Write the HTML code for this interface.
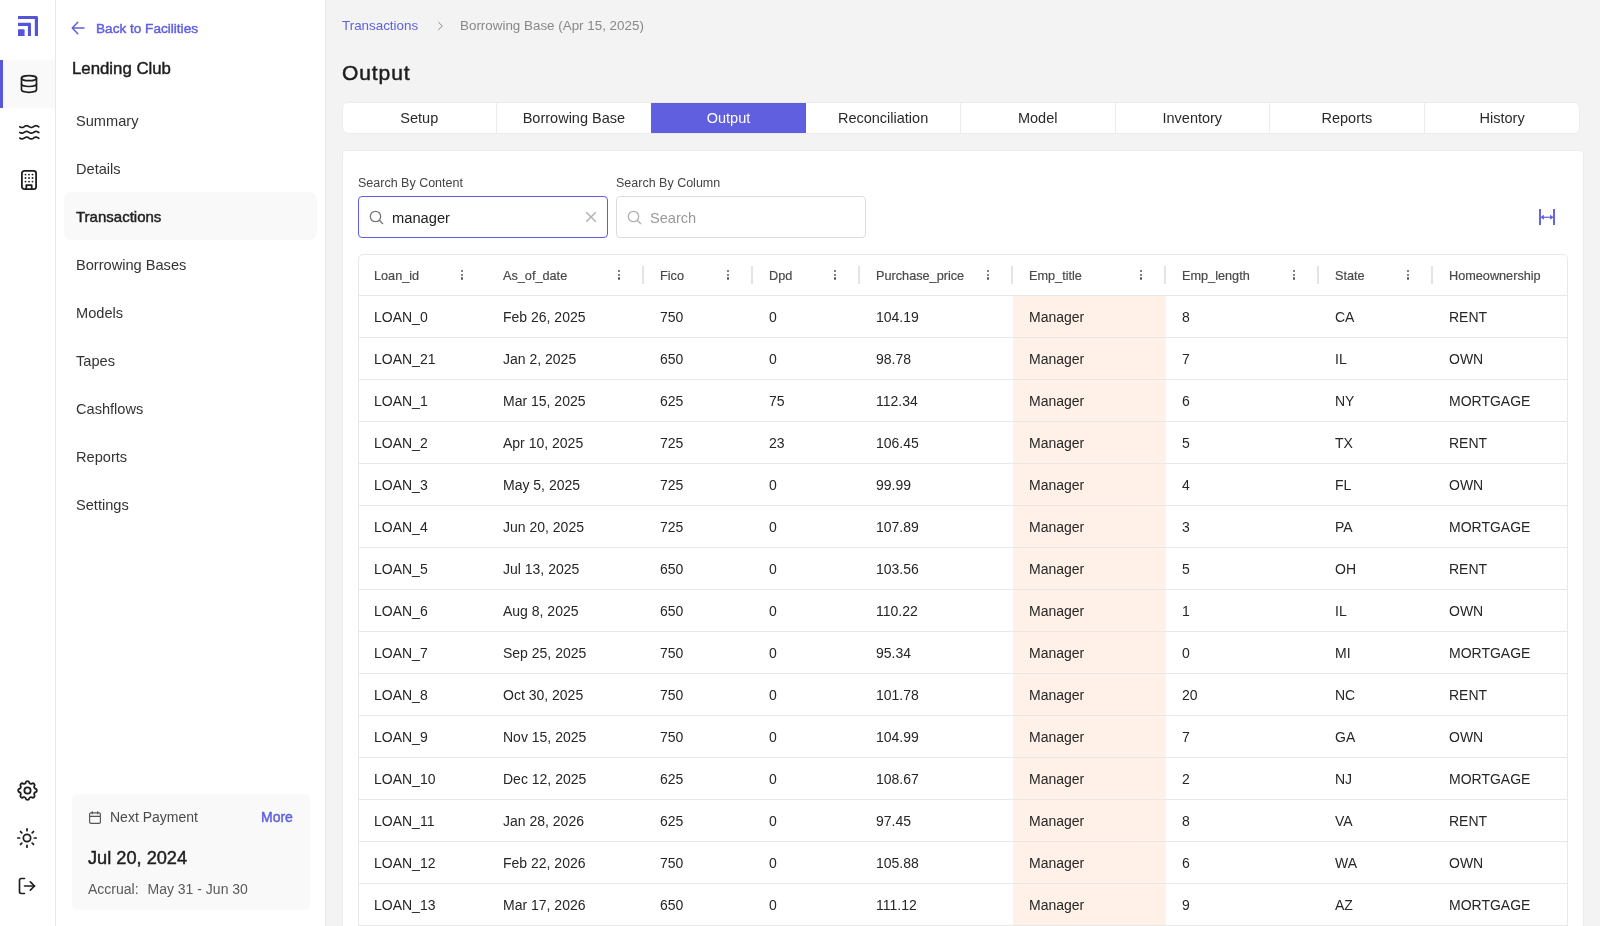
<!DOCTYPE html>
<html><head><meta charset="utf-8">
<style>
*{box-sizing:border-box;margin:0;padding:0}
html,body{width:1600px;height:926px;overflow:hidden;background:#f3f3f3;font-family:"Liberation Sans",sans-serif;color:#222}
.abs{position:absolute;white-space:nowrap}
#root{position:absolute;left:0;top:0;width:1600px;height:926px;will-change:transform}
.sb{-webkit-text-stroke:0.45px currentColor}
#rail{position:absolute;left:0;top:0;width:56px;height:926px;background:#fff;border-right:1px solid #e8e8e8}
#side{position:absolute;left:56px;top:0;width:270px;height:926px;background:#fff;border-right:1px solid #e8e8e8}
.ic{position:absolute;display:block}
.railact{position:absolute;left:0;top:60px;width:55px;height:48px;background:#f9f9f9}
.railbar{position:absolute;left:0;top:60px;width:3px;height:48px;background:#5856d9}
.nav{position:absolute;left:20px;margin-top:1px;font-size:14.6px;color:#333;white-space:nowrap;line-height:20px}
.navact{position:absolute;left:8px;top:192px;width:253px;height:48px;background:#f9f9f9;border-radius:7px}
.pay{position:absolute;left:16px;top:794px;width:238px;height:116px;background:#f9f9f9;border-radius:5px}
.crumb{position:absolute;top:16.5px;font-size:13.4px;white-space:nowrap;line-height:18px}
.tabs{position:absolute;left:342px;top:102px;width:1238px;height:32px;background:#fff;border-radius:6px;box-shadow:0 0 0 1px #ececec inset;overflow:hidden}
.tab{position:absolute;top:1px;height:30px;line-height:31px;text-align:center;font-size:14.5px;color:#2a2a2a}
.tdv{position:absolute;top:0;width:1px;height:32px;background:#ececec}
.tab.act{background:#5f5fe0;color:#fff}
.card{position:absolute;left:342px;top:150px;width:1242px;height:800px;background:#fff;border:1px solid #ececec;border-radius:4px}
.lbl{position:absolute;top:175px;font-size:12.5px;color:#444;white-space:nowrap;line-height:16px}
.inp{position:absolute;top:196px;width:250px;height:42px;border:1px solid #dcdcdc;border-radius:4px;background:#fff}
.inp.focus{border:1.5px solid #5e5ee0}
.inp .txt{position:absolute;left:33px;top:10.5px;line-height:20px;white-space:nowrap}
#tbl{position:absolute;left:358px;top:254px;width:1210px;height:700px;border:1px solid #e8e8e8;border-radius:5px 5px 0 0;background:#fff}
.th{position:absolute;top:254px;height:41px}
.th .tt{position:absolute;left:16px;top:14px;font-size:12.7px;color:#4a4a4a;-webkit-text-stroke:0.2px currentColor;line-height:16px;white-space:nowrap}
.sep{position:absolute;top:266px;width:2px;height:18px;background:#e4e4e4}
.keb{position:absolute;top:270px;width:2px;height:10px}
.keb i{position:absolute;left:0;width:2.2px;height:2.2px;border-radius:50%;background:#5a5a5a}
.hl{position:absolute;left:1013px;top:296px;width:153px;height:630px;background:#fff1e7}
.rl{position:absolute;left:359px;width:1208px;height:1px;background:#e8e8e8}
.td{position:absolute;height:42px;line-height:42px;padding-left:16px;font-size:14px;color:#262626;white-space:nowrap}
</style></head>
<body><div id="root">
<div id="rail">
  <svg class="ic" style="left:18px;top:16px" width="20" height="20" viewBox="0 0 20 20" fill="#5654d9">
    <path d="M0 0H18.8Q20 0 20 1.2V20H16.8V3.1H0Z"/>
    <path d="M0 6.8H11.8Q13 6.8 13 8V20H9.9V9.9H0Z"/>
    <path d="M0 13.2H5.6Q6.6 13.2 6.6 14.2V20H0Z"/>
  </svg>
  <div class="railact"></div><div class="railbar"></div>
  <svg class="ic" style="left:19px;top:74px" width="20" height="20" viewBox="0 0 24 24" fill="none" stroke="#1e1e1e" stroke-width="2" stroke-linecap="round" stroke-linejoin="round">
    <ellipse cx="12" cy="5" rx="9" ry="3"/><path d="M3 5v14c0 1.66 4 3 9 3s9-1.34 9-3V5"/><path d="M3 12c0 1.66 4 3 9 3s9-1.34 9-3"/>
  </svg>
  <svg class="ic" style="left:19px;top:123px" width="21" height="20" viewBox="0 0 21 20" fill="none" stroke="#1e1e1e" stroke-width="1.7" stroke-linecap="round" stroke-linejoin="round">
    <path d="M0.8 3.68L1.3 3.97L1.8 4.22L2.3 4.40L2.8 4.49L3.3 4.48L3.8 4.37L4.3 4.17L4.8 3.91L5.3 3.62L5.8 3.32L6.3 3.05L6.8 2.84L7.3 2.73L7.8 2.70L8.3 2.79L8.8 2.96L9.3 3.20L9.8 3.49L10.3 3.80L10.8 4.08L11.3 4.30L11.8 4.45L12.3 4.50L12.8 4.45L13.3 4.30L13.8 4.08L14.3 3.80L14.8 3.49L15.3 3.20L15.8 2.96L16.3 2.79L16.8 2.70L17.3 2.73L17.8 2.84L18.3 3.05L18.8 3.32L19.3 3.62L19.8 3.91"/><path d="M0.8 9.38L1.3 9.67L1.8 9.92L2.3 10.10L2.8 10.19L3.3 10.18L3.8 10.07L4.3 9.87L4.8 9.61L5.3 9.32L5.8 9.02L6.3 8.75L6.8 8.54L7.3 8.43L7.8 8.40L8.3 8.49L8.8 8.66L9.3 8.90L9.8 9.19L10.3 9.50L10.8 9.78L11.3 10.00L11.8 10.15L12.3 10.20L12.8 10.15L13.3 10.00L13.8 9.78L14.3 9.50L14.8 9.19L15.3 8.90L15.8 8.66L16.3 8.49L16.8 8.40L17.3 8.43L17.8 8.54L18.3 8.75L18.8 9.02L19.3 9.32L19.8 9.61"/><path d="M0.8 15.08L1.3 15.37L1.8 15.62L2.3 15.80L2.8 15.89L3.3 15.88L3.8 15.77L4.3 15.57L4.8 15.31L5.3 15.02L5.8 14.72L6.3 14.45L6.8 14.24L7.3 14.13L7.8 14.10L8.3 14.19L8.8 14.36L9.3 14.60L9.8 14.89L10.3 15.20L10.8 15.48L11.3 15.70L11.8 15.85L12.3 15.90L12.8 15.85L13.3 15.70L13.8 15.48L14.3 15.20L14.8 14.89L15.3 14.60L15.8 14.36L16.3 14.19L16.8 14.10L17.3 14.13L17.8 14.24L18.3 14.45L18.8 14.72L19.3 15.02L19.8 15.31"/>
  </svg>
  <svg class="ic" style="left:21px;top:170px" width="16" height="20" viewBox="0 0 16 20" fill="none" stroke="#1e1e1e" stroke-width="1.8" stroke-linecap="round" stroke-linejoin="round">
    <rect x="0.9" y="0.9" width="14.2" height="18.2" rx="2.4"/><path d="M5.3 19V15.2H10.7V19"/>
    <g fill="#1e1e1e" stroke="none"><circle cx="4.5" cy="4.6" r="0.95"/><circle cx="8" cy="4.6" r="0.95"/><circle cx="11.5" cy="4.6" r="0.95"/><circle cx="4.5" cy="8" r="0.95"/><circle cx="8" cy="8" r="0.95"/><circle cx="11.5" cy="8" r="0.95"/><circle cx="4.5" cy="11.6" r="0.95"/><circle cx="8" cy="11.6" r="0.95"/><circle cx="11.5" cy="11.6" r="0.95"/></g>
  </svg>
  <svg class="ic" style="left:14.5px;top:777.5px" width="25" height="25" viewBox="0 0 24 24" fill="none" stroke="#1e1e1e" stroke-width="1.75" stroke-linecap="round" stroke-linejoin="round">
    <path d="M10.325 4.317c.426-1.756 2.924-1.756 3.35 0a1.724 1.724 0 0 0 2.573 1.066c1.543-.94 3.31.826 2.37 2.37a1.724 1.724 0 0 0 1.065 2.572c1.756.426 1.756 2.924 0 3.35a1.724 1.724 0 0 0-1.066 2.573c.94 1.543-.826 3.31-2.37 2.37a1.724 1.724 0 0 0-2.572 1.065c-.426 1.756-2.924 1.756-3.35 0a1.724 1.724 0 0 0-2.573-1.066c-1.543.94-3.31-.826-2.37-2.37a1.724 1.724 0 0 0-1.065-2.572c-1.756-.426-1.756-2.924 0-3.35a1.724 1.724 0 0 0 1.066-2.573c-.94-1.543.826-3.31 2.37-2.37c1 .608 2.296.07 2.572-1.065z"/><circle cx="12" cy="12" r="3"/>
  </svg>
  <svg class="ic" style="left:16px;top:827px" width="22" height="22" viewBox="0 0 24 24" fill="none" stroke="#1e1e1e" stroke-width="1.9" stroke-linecap="round" stroke-linejoin="round">
    <circle cx="12" cy="12" r="4"/><path d="M12 2v2M12 20v2M4.93 4.93l1.41 1.41M17.66 17.66l1.41 1.41M2 12h2M20 12h2M6.34 17.66l-1.41 1.41M19.07 4.93l-1.41 1.41"/>
  </svg>
  <svg class="ic" style="left:17px;top:876px" width="20" height="20" viewBox="0 0 24 24" fill="none" stroke="#1e1e1e" stroke-width="2" stroke-linecap="round" stroke-linejoin="round">
    <path d="M9 21H5a2 2 0 0 1-2-2V5a2 2 0 0 1 2-2h4"/><polyline points="16 17 21 12 16 7"/><line x1="21" y1="12" x2="9" y2="12"/>
  </svg>
</div>

<div id="side">
  <svg class="ic" style="left:15px;top:21px" width="14" height="14" viewBox="0 0 14 14" fill="none" stroke="#5f5fe0" stroke-width="1.5" stroke-linecap="round" stroke-linejoin="round">
    <path d="M13 7H1.2M6.8 1.2L1.2 7l5.6 5.8"/>
  </svg>
  <div class="abs sb" style="left:40px;top:21px;font-size:13.6px;line-height:16px;color:#5f5fe0">Back to Facilities</div>
  <div class="abs sb" style="left:16px;top:59px;font-size:16.8px;line-height:20px;color:#1e1e1e">Lending Club</div>
  <div class="navact"></div>
  <div class="nav" style="top:110px">Summary</div>
  <div class="nav" style="top:158px">Details</div>
  <div class="nav sb" style="top:206px;color:#222;font-size:15px">Transactions</div>
  <div class="nav" style="top:254px">Borrowing Bases</div>
  <div class="nav" style="top:302px">Models</div>
  <div class="nav" style="top:350px">Tapes</div>
  <div class="nav" style="top:398px">Cashflows</div>
  <div class="nav" style="top:446px">Reports</div>
  <div class="nav" style="top:494px">Settings</div>
  <div class="pay">
    <svg class="ic" style="left:17px;top:17px" width="12" height="13" viewBox="0 0 12 13" fill="none" stroke="#555" stroke-width="1.15">
      <rect x="0.6" y="1.9" width="10.8" height="10.5" rx="1.4"/><path d="M0.6 5.3h10.8M3.3 0.3v3M8.7 0.3v3"/>
    </svg>
    <div class="abs" style="left:38px;top:15px;font-size:14px;color:#4a4a4a;line-height:16px">Next Payment</div>
    <div class="abs sb" style="left:189px;top:15px;font-size:14px;color:#5f5fe0;line-height:16px">More</div>
    <div class="abs sb" style="left:16px;top:53px;font-size:18.2px;color:#1e1e1e;line-height:22px">Jul 20, 2024</div>
    <div class="abs" style="left:16px;top:87px;font-size:14px;color:#5a5a5a;line-height:16px">Accrual:</div><div class="abs" style="left:75.5px;top:87px;font-size:14px;color:#5a5a5a;line-height:16px">May 31 - Jun 30</div>
  </div>
</div>

<div class="crumb" style="left:342px;color:#5f5fe0">Transactions</div>
<svg class="ic" style="left:437px;top:21px" width="7" height="10" viewBox="0 0 7 10" fill="none" stroke="#888" stroke-width="1"><path d="M1.4 1.2l3.9 3.8-3.9 3.8"/></svg>
<div class="crumb" style="left:460px;color:#888">Borrowing Base (Apr 15, 2025)</div>
<div class="abs" style="left:342px;top:61px;font-size:21px;line-height:24px;letter-spacing:0.9px;-webkit-text-stroke:0.5px currentColor;color:#1e1e1e">Output</div>
<div class="tabs">
  <div class="tab" style="left:0;width:154.6px">Setup</div>
  <div class="tab" style="left:154.6px;width:154.6px">Borrowing Base</div>
  <div class="tab act" style="left:309.2px;width:154.6px">Output</div>
  <div class="tab" style="left:463.8px;width:154.6px">Reconciliation</div>
  <div class="tab" style="left:618.4px;width:154.6px">Model</div>
  <div class="tab" style="left:773px;width:154.6px">Inventory</div>
  <div class="tab" style="left:927.6px;width:154.6px">Reports</div>
  <div class="tab" style="left:1082.2px;width:155.8px">History</div>
  <div class="tdv" style="left:154px"></div>
  <div class="tdv" style="left:618px"></div>
  <div class="tdv" style="left:773px"></div>
  <div class="tdv" style="left:927px"></div>
  <div class="tdv" style="left:1082px"></div>
</div>
<div class="card"></div>

<div class="lbl" style="left:358px">Search By Content</div>
<div class="lbl" style="left:616px">Search By Column</div>
<div class="inp focus" style="left:358px">
  <svg class="ic" style="left:9.5px;top:12.5px" width="15" height="15" viewBox="0 0 15 15" fill="none" stroke="#777" stroke-width="1.3"><circle cx="6.5" cy="6.5" r="5.2"/><path d="M10.3 10.3L14 14"/></svg>
  <div class="txt" style="color:#222;font-size:14.7px">manager</div>
  <svg class="ic" style="left:226px;top:13.5px" width="12" height="12" viewBox="0 0 12 12" fill="none" stroke="#b5b5b5" stroke-width="1.6"><path d="M1.2 1.2l9.6 9.6M10.8 1.2L1.2 10.8"/></svg>
</div>
<div class="inp" style="left:616px">
  <svg class="ic" style="left:10px;top:12.5px" width="15" height="15" viewBox="0 0 15 15" fill="none" stroke="#b0b0b0" stroke-width="1.3"><circle cx="6.5" cy="6.5" r="5.2"/><path d="M10.3 10.3L14 14"/></svg>
  <div class="txt" style="color:#999;font-size:14.6px">Search</div>
</div>
<svg class="ic" style="left:1538px;top:208px" width="18" height="18" viewBox="0 0 18 18" fill="none" stroke="#5f5fe0">
  <path d="M2 1v16M16 1v16" stroke-width="1.9"/><path d="M3.5 9.25h11" stroke-width="1.2"/><path d="M5.8 7.3l-2.3 1.95 2.3 1.95M12.2 7.3l2.3 1.95-2.3 1.95" stroke-width="1.1" fill="#5f5fe0"/>
</svg>
<div id="tbl"></div>
<div class="th" style="left:358px;width:129px"><span class="tt">Loan_id</span></div>
<div class="th" style="left:487px;width:157px"><span class="tt">As_of_date</span></div>
<div class="keb" style="left:461px"><i style="top:0"></i><i style="top:3.7px"></i><i style="top:7.4px"></i></div>
<div class="th" style="left:644px;width:109px"><span class="tt">Fico</span></div>
<div class="sep" style="left:642px"></div>
<div class="keb" style="left:618px"><i style="top:0"></i><i style="top:3.7px"></i><i style="top:7.4px"></i></div>
<div class="th" style="left:753px;width:107px"><span class="tt">Dpd</span></div>
<div class="sep" style="left:751px"></div>
<div class="keb" style="left:727px"><i style="top:0"></i><i style="top:3.7px"></i><i style="top:7.4px"></i></div>
<div class="th" style="left:860px;width:153px"><span class="tt">Purchase_price</span></div>
<div class="sep" style="left:858px"></div>
<div class="keb" style="left:834px"><i style="top:0"></i><i style="top:3.7px"></i><i style="top:7.4px"></i></div>
<div class="th" style="left:1013px;width:153px"><span class="tt">Emp_title</span></div>
<div class="sep" style="left:1011px"></div>
<div class="keb" style="left:987px"><i style="top:0"></i><i style="top:3.7px"></i><i style="top:7.4px"></i></div>
<div class="th" style="left:1166px;width:153px"><span class="tt">Emp_length</span></div>
<div class="sep" style="left:1164px"></div>
<div class="keb" style="left:1140px"><i style="top:0"></i><i style="top:3.7px"></i><i style="top:7.4px"></i></div>
<div class="th" style="left:1319px;width:114px"><span class="tt">State</span></div>
<div class="sep" style="left:1317px"></div>
<div class="keb" style="left:1293px"><i style="top:0"></i><i style="top:3.7px"></i><i style="top:7.4px"></i></div>
<div class="th" style="left:1433px;width:134px"><span class="tt">Homeownership</span></div>
<div class="sep" style="left:1431px"></div>
<div class="keb" style="left:1407px"><i style="top:0"></i><i style="top:3.7px"></i><i style="top:7.4px"></i></div>
<div class="hl"></div>
<div class="rl" style="top:295px"></div>
<div class="rl" style="top:337px"></div>
<div class="rl" style="top:379px"></div>
<div class="rl" style="top:421px"></div>
<div class="rl" style="top:463px"></div>
<div class="rl" style="top:505px"></div>
<div class="rl" style="top:547px"></div>
<div class="rl" style="top:589px"></div>
<div class="rl" style="top:631px"></div>
<div class="rl" style="top:673px"></div>
<div class="rl" style="top:715px"></div>
<div class="rl" style="top:757px"></div>
<div class="rl" style="top:799px"></div>
<div class="rl" style="top:841px"></div>
<div class="rl" style="top:883px"></div>
<div class="rl" style="top:925px"></div>
<div class="td" style="left:358px;top:296px">LOAN_0</div>
<div class="td" style="left:487px;top:296px">Feb 26, 2025</div>
<div class="td" style="left:644px;top:296px">750</div>
<div class="td" style="left:753px;top:296px">0</div>
<div class="td" style="left:860px;top:296px">104.19</div>
<div class="td" style="left:1013px;top:296px">Manager</div>
<div class="td" style="left:1166px;top:296px">8</div>
<div class="td" style="left:1319px;top:296px">CA</div>
<div class="td" style="left:1433px;top:296px">RENT</div>
<div class="td" style="left:358px;top:338px">LOAN_21</div>
<div class="td" style="left:487px;top:338px">Jan 2, 2025</div>
<div class="td" style="left:644px;top:338px">650</div>
<div class="td" style="left:753px;top:338px">0</div>
<div class="td" style="left:860px;top:338px">98.78</div>
<div class="td" style="left:1013px;top:338px">Manager</div>
<div class="td" style="left:1166px;top:338px">7</div>
<div class="td" style="left:1319px;top:338px">IL</div>
<div class="td" style="left:1433px;top:338px">OWN</div>
<div class="td" style="left:358px;top:380px">LOAN_1</div>
<div class="td" style="left:487px;top:380px">Mar 15, 2025</div>
<div class="td" style="left:644px;top:380px">625</div>
<div class="td" style="left:753px;top:380px">75</div>
<div class="td" style="left:860px;top:380px">112.34</div>
<div class="td" style="left:1013px;top:380px">Manager</div>
<div class="td" style="left:1166px;top:380px">6</div>
<div class="td" style="left:1319px;top:380px">NY</div>
<div class="td" style="left:1433px;top:380px">MORTGAGE</div>
<div class="td" style="left:358px;top:422px">LOAN_2</div>
<div class="td" style="left:487px;top:422px">Apr 10, 2025</div>
<div class="td" style="left:644px;top:422px">725</div>
<div class="td" style="left:753px;top:422px">23</div>
<div class="td" style="left:860px;top:422px">106.45</div>
<div class="td" style="left:1013px;top:422px">Manager</div>
<div class="td" style="left:1166px;top:422px">5</div>
<div class="td" style="left:1319px;top:422px">TX</div>
<div class="td" style="left:1433px;top:422px">RENT</div>
<div class="td" style="left:358px;top:464px">LOAN_3</div>
<div class="td" style="left:487px;top:464px">May 5, 2025</div>
<div class="td" style="left:644px;top:464px">725</div>
<div class="td" style="left:753px;top:464px">0</div>
<div class="td" style="left:860px;top:464px">99.99</div>
<div class="td" style="left:1013px;top:464px">Manager</div>
<div class="td" style="left:1166px;top:464px">4</div>
<div class="td" style="left:1319px;top:464px">FL</div>
<div class="td" style="left:1433px;top:464px">OWN</div>
<div class="td" style="left:358px;top:506px">LOAN_4</div>
<div class="td" style="left:487px;top:506px">Jun 20, 2025</div>
<div class="td" style="left:644px;top:506px">725</div>
<div class="td" style="left:753px;top:506px">0</div>
<div class="td" style="left:860px;top:506px">107.89</div>
<div class="td" style="left:1013px;top:506px">Manager</div>
<div class="td" style="left:1166px;top:506px">3</div>
<div class="td" style="left:1319px;top:506px">PA</div>
<div class="td" style="left:1433px;top:506px">MORTGAGE</div>
<div class="td" style="left:358px;top:548px">LOAN_5</div>
<div class="td" style="left:487px;top:548px">Jul 13, 2025</div>
<div class="td" style="left:644px;top:548px">650</div>
<div class="td" style="left:753px;top:548px">0</div>
<div class="td" style="left:860px;top:548px">103.56</div>
<div class="td" style="left:1013px;top:548px">Manager</div>
<div class="td" style="left:1166px;top:548px">5</div>
<div class="td" style="left:1319px;top:548px">OH</div>
<div class="td" style="left:1433px;top:548px">RENT</div>
<div class="td" style="left:358px;top:590px">LOAN_6</div>
<div class="td" style="left:487px;top:590px">Aug 8, 2025</div>
<div class="td" style="left:644px;top:590px">650</div>
<div class="td" style="left:753px;top:590px">0</div>
<div class="td" style="left:860px;top:590px">110.22</div>
<div class="td" style="left:1013px;top:590px">Manager</div>
<div class="td" style="left:1166px;top:590px">1</div>
<div class="td" style="left:1319px;top:590px">IL</div>
<div class="td" style="left:1433px;top:590px">OWN</div>
<div class="td" style="left:358px;top:632px">LOAN_7</div>
<div class="td" style="left:487px;top:632px">Sep 25, 2025</div>
<div class="td" style="left:644px;top:632px">750</div>
<div class="td" style="left:753px;top:632px">0</div>
<div class="td" style="left:860px;top:632px">95.34</div>
<div class="td" style="left:1013px;top:632px">Manager</div>
<div class="td" style="left:1166px;top:632px">0</div>
<div class="td" style="left:1319px;top:632px">MI</div>
<div class="td" style="left:1433px;top:632px">MORTGAGE</div>
<div class="td" style="left:358px;top:674px">LOAN_8</div>
<div class="td" style="left:487px;top:674px">Oct 30, 2025</div>
<div class="td" style="left:644px;top:674px">750</div>
<div class="td" style="left:753px;top:674px">0</div>
<div class="td" style="left:860px;top:674px">101.78</div>
<div class="td" style="left:1013px;top:674px">Manager</div>
<div class="td" style="left:1166px;top:674px">20</div>
<div class="td" style="left:1319px;top:674px">NC</div>
<div class="td" style="left:1433px;top:674px">RENT</div>
<div class="td" style="left:358px;top:716px">LOAN_9</div>
<div class="td" style="left:487px;top:716px">Nov 15, 2025</div>
<div class="td" style="left:644px;top:716px">750</div>
<div class="td" style="left:753px;top:716px">0</div>
<div class="td" style="left:860px;top:716px">104.99</div>
<div class="td" style="left:1013px;top:716px">Manager</div>
<div class="td" style="left:1166px;top:716px">7</div>
<div class="td" style="left:1319px;top:716px">GA</div>
<div class="td" style="left:1433px;top:716px">OWN</div>
<div class="td" style="left:358px;top:758px">LOAN_10</div>
<div class="td" style="left:487px;top:758px">Dec 12, 2025</div>
<div class="td" style="left:644px;top:758px">625</div>
<div class="td" style="left:753px;top:758px">0</div>
<div class="td" style="left:860px;top:758px">108.67</div>
<div class="td" style="left:1013px;top:758px">Manager</div>
<div class="td" style="left:1166px;top:758px">2</div>
<div class="td" style="left:1319px;top:758px">NJ</div>
<div class="td" style="left:1433px;top:758px">MORTGAGE</div>
<div class="td" style="left:358px;top:800px">LOAN_11</div>
<div class="td" style="left:487px;top:800px">Jan 28, 2026</div>
<div class="td" style="left:644px;top:800px">625</div>
<div class="td" style="left:753px;top:800px">0</div>
<div class="td" style="left:860px;top:800px">97.45</div>
<div class="td" style="left:1013px;top:800px">Manager</div>
<div class="td" style="left:1166px;top:800px">8</div>
<div class="td" style="left:1319px;top:800px">VA</div>
<div class="td" style="left:1433px;top:800px">RENT</div>
<div class="td" style="left:358px;top:842px">LOAN_12</div>
<div class="td" style="left:487px;top:842px">Feb 22, 2026</div>
<div class="td" style="left:644px;top:842px">750</div>
<div class="td" style="left:753px;top:842px">0</div>
<div class="td" style="left:860px;top:842px">105.88</div>
<div class="td" style="left:1013px;top:842px">Manager</div>
<div class="td" style="left:1166px;top:842px">6</div>
<div class="td" style="left:1319px;top:842px">WA</div>
<div class="td" style="left:1433px;top:842px">OWN</div>
<div class="td" style="left:358px;top:884px">LOAN_13</div>
<div class="td" style="left:487px;top:884px">Mar 17, 2026</div>
<div class="td" style="left:644px;top:884px">650</div>
<div class="td" style="left:753px;top:884px">0</div>
<div class="td" style="left:860px;top:884px">111.12</div>
<div class="td" style="left:1013px;top:884px">Manager</div>
<div class="td" style="left:1166px;top:884px">9</div>
<div class="td" style="left:1319px;top:884px">AZ</div>
<div class="td" style="left:1433px;top:884px">MORTGAGE</div>
</div></body></html>
